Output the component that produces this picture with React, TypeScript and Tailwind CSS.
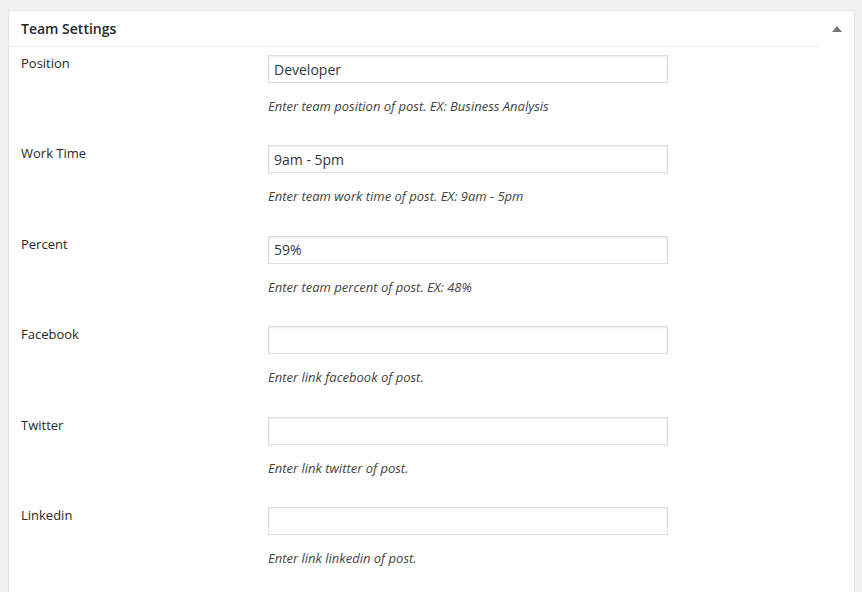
const fields = [
  { label: 'Position', value: 'Developer', help: 'Enter team position of post. EX: Business Analysis' },
  { label: 'Work Time', value: '9am - 5pm', help: 'Enter team work time of post. EX: 9am - 5pm' },
  { label: 'Percent', value: '59%', help: 'Enter team percent of post. EX: 48%' },
  { label: 'Facebook', value: '', help: 'Enter link facebook of post.' },
  { label: 'Twitter', value: '', help: 'Enter link twitter of post.' },
  { label: 'Linkedin', value: '', help: 'Enter link linkedin of post.' },
]

export default function App() {
  return (
    <div
      className="min-h-[592px] w-[862px] overflow-hidden bg-[#f1f1f1] pt-[10px] pl-2 pr-[7px]"
      style={{ fontFamily: '"Open Sans", sans-serif' }}
    >
      <div className="h-[600px] border border-[#e5e5e5] bg-white shadow-[0_1px_1px_rgba(0,0,0,0.04)]">
        <div className="flex h-[36px] items-center justify-between">
          <div className="flex h-full w-[810px] items-center border-b border-[#eeeeee] pl-3">
            <h2 className="text-[14px] font-semibold leading-none text-[#23282d]">Team Settings</h2>
          </div>
          <div className="flex w-[36px] items-center justify-center pb-[1px] pl-[2px]">
            <svg width="10" height="6" viewBox="0 0 10 6">
              <path d="M5 0 L10 6 L0 6 Z" fill="#72777c" />
            </svg>
          </div>
        </div>
        <div className="pt-[5px]">
          {fields.map((f) => (
            <div key={f.label} className="flex h-[90.4px] pl-3">
              <label className="w-[247px] pt-[1px] text-[13px] leading-[20px] text-[#23282d]">{f.label}</label>
              <div className="pt-[3px]">
                <input
                  type="text"
                  defaultValue={f.value}
                  className="block h-[28px] w-[400px] border border-[#dddddd] px-[5px] text-[14px] text-[#32373c] shadow-[inset_0_1px_2px_rgba(0,0,0,0.07)] outline-none"
                  style={{ fontFamily: '"Open Sans", sans-serif' }}
                />
                <p className="mt-[14px] text-[13px] italic leading-[18px] text-[#444444]">{f.help}</p>
              </div>
            </div>
          ))}
        </div>
      </div>
    </div>
  )
}
